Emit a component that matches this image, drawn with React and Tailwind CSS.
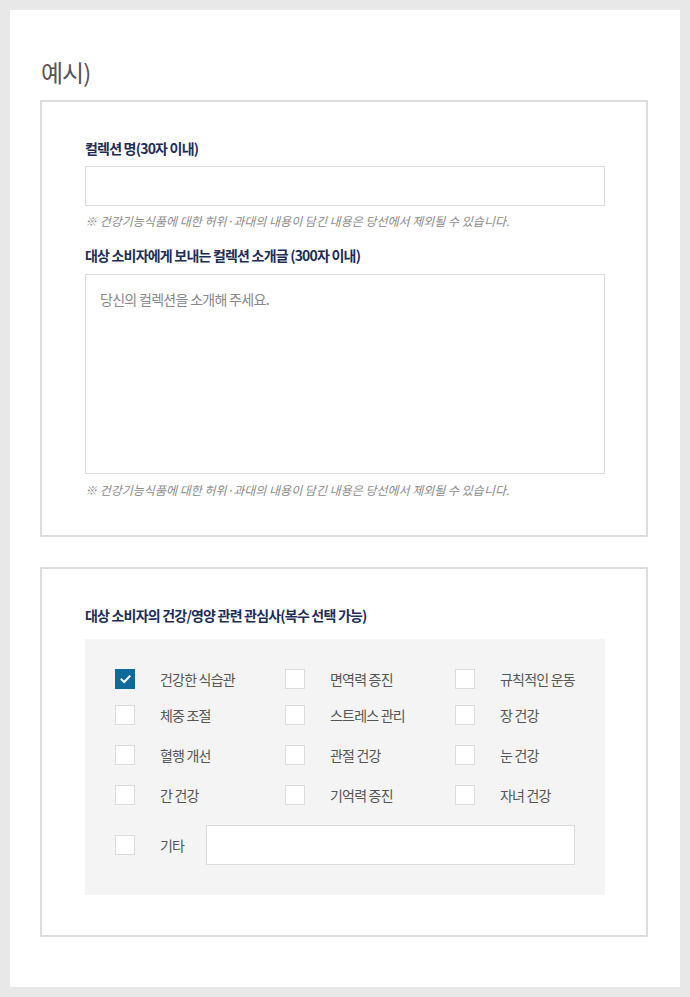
import React from "react";

const font = { fontFamily: '"Noto Sans CJK KR", "Noto Sans", sans-serif' };

function Box({ checked }) {
  return (
    <div
      className={
        "w-[20px] h-[20px] shrink-0 flex items-center justify-center border " +
        (checked ? "bg-[#0b6b9b] border-[#0b6b9b]" : "bg-white border-[#dcdcdc]")
      }
    >
      {checked && (
        <svg width="11" height="9" viewBox="0 0 11 9" fill="none">
          <path d="M1.5 4.5 L4.2 7 L9.5 1.5" stroke="white" strokeWidth="2" strokeLinecap="square" />
        </svg>
      )}
    </div>
  );
}

function Item({ label, checked }) {
  return (
    <div className="flex items-center w-[170px] shrink-0">
      <Box checked={checked} />
      <span className="ml-[25px] text-[14px] leading-[20px] text-[#555] tracking-[-0.8px] whitespace-nowrap">{label}</span>
    </div>
  );
}

const Note = () => (
  <p className="text-[12px] leading-[18px] text-[#8a8a8a] italic tracking-[0px] whitespace-nowrap">
    ※ 건강기능식품에 대한 허위·과대의 내용이 담긴 내용은 당선에서 제외될 수 있습니다.
  </p>
);

export default function App() {
  const rows = [
    [["건강한 식습관", true], ["면역력 증진"], ["규칙적인 운동"]],
    [["체중 조절"], ["스트레스 관리"], ["장 건강"]],
    [["혈행 개선"], ["관절 건강"], ["눈 건강"]],
    [["간 건강"], ["기억력 증진"], ["자녀 건강"]],
  ];
  const rowMt = ["mt-0", "mt-[16px]", "mt-[20px]", "mt-[20px]"];
  return (
    <div className="bg-[#e8e8e8] p-[10px] w-[690px] min-h-[997px]" style={font}>
      <div className="bg-white pl-[30px] pr-[32px] pt-[46px] pb-[50px]">
        <h1 className="text-[24px] leading-[32px] text-[#555] font-normal tracking-[-1px] pl-[1px]">예시)</h1>
        <div className="mt-[12px] border-2 border-[#dddddd] pl-[43px] pr-[41px] pt-[36px] pb-[36px]">
          <p className="text-[14px] leading-[20px] font-bold text-[#1c2d57] tracking-[-0.8px]">컬렉션 명(30자 이내)</p>
          <div className="mt-[8px] h-[40px] border border-[#dcdcdc] bg-white"></div>
          <div className="mt-[6px]"><Note /></div>
          <p className="mt-[15px] text-[14px] leading-[20px] font-bold text-[#1c2d57] tracking-[-0.8px]">대상 소비자에게 보내는 컬렉션 소개글 (300자 이내)</p>
          <div className="mt-[9px] h-[200px] border border-[#dcdcdc] bg-white px-[14px] pt-[11px]">
            <span className="text-[14px] leading-[20px] text-[#888] tracking-[-0.7px]">당신의 컬렉션을 소개해 주세요.</span>
          </div>
          <div className="mt-[7px]"><Note /></div>
        </div>
        <div className="mt-[30px] border-2 border-[#dddddd] pl-[43px] pr-[41px] pt-[36px] pb-[40px]">
          <p className="text-[14px] leading-[20px] font-bold text-[#1c2d57] tracking-[-0.8px]">대상 소비자의 건강/영양 관련 관심사(복수 선택 가능)</p>
          <div className="mt-[14px] bg-[#f4f4f4] p-[30px]">
            {rows.map((r, i) => (
              <div key={i} className={"flex " + rowMt[i]}>
                {r.map(([l, c]) => (
                  <Item key={l} label={l} checked={!!c} />
                ))}
              </div>
            ))}
            <div className="mt-[20px] flex items-center">
              <Box />
              <span className="ml-[25px] w-[46px] text-[14px] leading-[20px] text-[#555] tracking-[-0.8px]">기타</span>
              <div className="h-[40px] w-[369px] border border-[#dcdcdc] bg-white"></div>
            </div>
          </div>
        </div>
      </div>
    </div>
  );
}
